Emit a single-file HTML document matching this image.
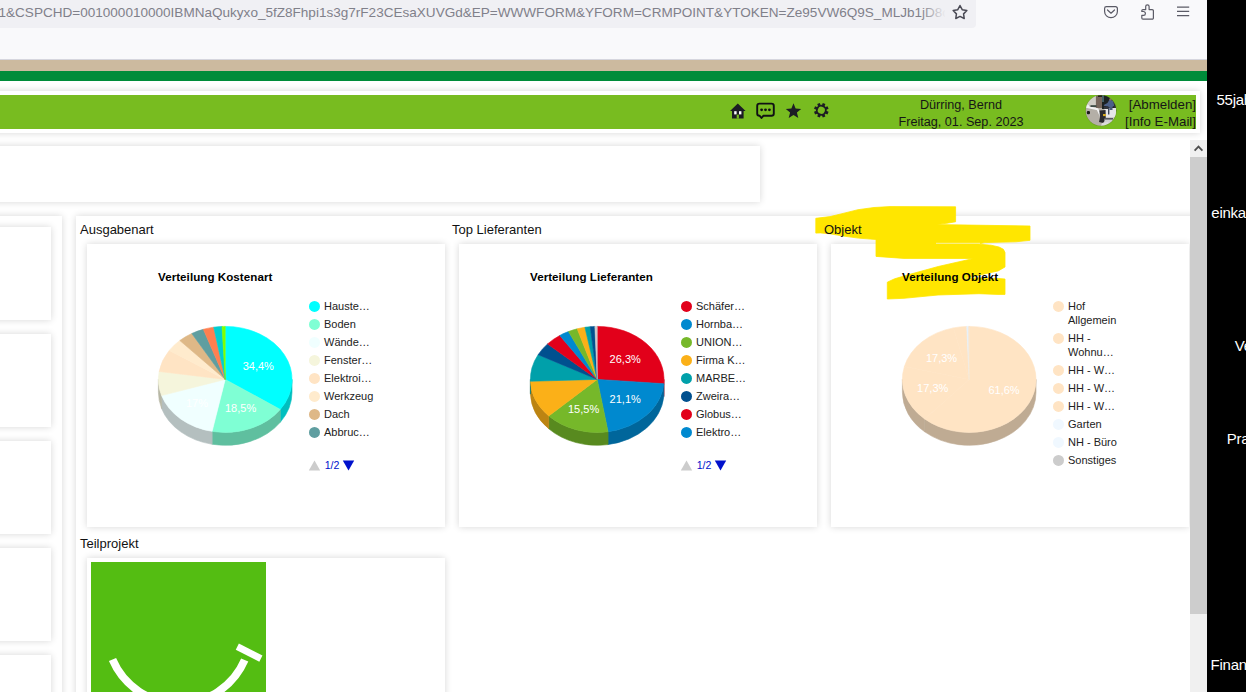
<!DOCTYPE html>
<html lang="de">
<head>
<meta charset="utf-8">
<title>CRM Point</title>
<style>
html,body{margin:0;padding:0;}
body{width:1246px;height:692px;overflow:hidden;position:relative;background:#fff;font-family:"Liberation Sans",sans-serif;font-size:13px;color:#1a1a1a;}
.abs{position:absolute;}
.card{position:absolute;background:#fff;box-shadow:0 0 7px rgba(0,0,0,0.16);}
.sec{position:absolute;font-size:13px;color:#111;white-space:nowrap;line-height:16px;}
.blk{position:absolute;color:#fff;font-size:15px;letter-spacing:-0.25px;white-space:nowrap;line-height:18px;}
svg text{font-family:"Liberation Sans",sans-serif;}
</style>
</head>
<body>
<!-- browser chrome -->
<div class="abs" style="left:0;top:0;width:1207px;height:60px;background:#f9f9fb;"></div>
<div class="abs" style="left:-10px;top:-6px;width:985.6px;height:34.1px;background:#f0f0f4;border-radius:4px;"></div>
<div class="abs" id="url" style="left:-1.5px;top:4.3px;width:946px;overflow:hidden;font-size:13.55px;line-height:18px;color:#80808a;white-space:nowrap;letter-spacing:0px;">1&amp;CSPCHD=001000010000IBMNaQukyxo_5fZ8Fhpi1s3g7rF23CEsaXUVGd&amp;EP=WWWFORM&amp;YFORM=CRMPOINT&amp;YTOKEN=Ze95VW6Q9S_MLJb1jD8c</div>
<div class="abs" style="left:921px;top:0;width:25px;height:28px;background:linear-gradient(90deg,rgba(240,240,244,0),rgba(240,240,244,1));"></div>
<svg class="abs" style="left:0;top:0;" width="1207" height="60" viewBox="0 0 1207 60">
  <!-- bookmark star -->
  <path d="M960.00,5.50 L962.20,9.67 L966.85,10.48 L963.57,13.86 L964.23,18.52 L960.00,16.45 L955.77,18.52 L956.43,13.86 L953.15,10.48 L957.80,9.67 Z" fill="none" stroke="#4a4a55" stroke-width="1.5" stroke-linejoin="round"/>
  <!-- pocket -->
  <path d="M1106.4,6.7 h9.2 a1.8,1.8 0 0 1 1.8,1.8 v3 a6.4,6.2 0 0 1 -12.8,0 v-3 a1.8,1.8 0 0 1 1.8,-1.8 Z" fill="none" stroke="#5b5b66" stroke-width="1.2"/>
  <path d="M1107.5,10 l3.5,3.2 l3.5,-3.2" fill="none" stroke="#5b5b66" stroke-width="1.2" stroke-linecap="round" stroke-linejoin="round"/>
  <!-- extension puzzle -->
  <path d="M1143,9.6 h2.7 v-3.1 a1.7,1.7 0 0 1 3.4,0 v3.1 h3.1 a1.2,1.2 0 0 1 1.2,1.2 v7.1 a1.2,1.2 0 0 1 -1.2,1.2 h-9.2 a1.2,1.2 0 0 1 -1.2,-1.2 v-2.6 h1.7 a1.9,1.9 0 0 0 0,-3.8 h-1.7 v-0.7 a1.2,1.2 0 0 1 1.2,-1.2 Z" fill="none" stroke="#5b5b66" stroke-width="1.2" stroke-linejoin="round"/>
  <!-- hamburger -->
  <path d="M1177,7.1 h12.2 M1177,11.4 h12.2 M1177,15.6 h12.2" stroke="#5b5b66" stroke-width="1.2"/>
</svg>

<!-- site top bands -->
<div class="abs" style="left:0;top:59px;width:1207px;height:1px;background:#d6d6de;"></div>
<div class="abs" style="left:0;top:60px;width:1207px;height:11px;background:#ccba9f;"></div>
<div class="abs" style="left:0;top:71px;width:1207px;height:10px;background:#008c3a;"></div>

<!-- header card -->
<div class="card" style="left:-10px;top:91px;width:1210px;height:42px;"></div>
<div class="abs" style="left:0;top:95px;width:1196px;height:34px;background:#78bc20;"></div>
<svg class="abs" style="left:720px;top:95px;" width="120" height="34" viewBox="720 95 120 34">
  <!-- home -->
  <path d="M737.8,103.5 l7.8,7.4 h-2 v7.6 h-11.6 v-7.6 h-2 Z" fill="#1c1c24"/>
  <rect x="734.2" y="111.2" width="2.4" height="3.2" fill="#fff"/><rect x="739" y="111.2" width="2.4" height="3.2" fill="#fff"/>
  <rect x="736.7" y="114.6" width="2.2" height="4" fill="#78bc20"/>
  <!-- chat -->
  <path d="M759.5,103.6 h12 a2.3,2.3 0 0 1 2.3,2.3 v7.6 a2.3,2.3 0 0 1 -2.3,2.3 h-8.2 l-1.8,2.2 l-1.8,-2.2 h-0.2 a2.3,2.3 0 0 1 -2.3,-2.3 v-7.6 a2.3,2.3 0 0 1 2.3,-2.3 Z" fill="none" stroke="#101014" stroke-width="1.9" stroke-linejoin="round"/>
  <circle cx="761.6" cy="109.8" r="1.4" fill="#101014"/><circle cx="765.5" cy="109.8" r="1.4" fill="#101014"/><circle cx="769.4" cy="109.8" r="1.4" fill="#101014"/>
  <!-- star -->
  <path d="M793.5,103.2 l2.1,5.3 l5.6,0.4 l-4.3,3.6 l1.4,5.6 l-4.8,-3.1 l-4.8,3.1 l1.4,-5.6 l-4.3,-3.6 l5.6,-0.4 Z" fill="#1c1c24"/>
  <!-- gear -->
  <g transform="translate(821.3,110.3) rotate(22.5)">
    <circle r="4.5" fill="none" stroke="#1c1c24" stroke-width="1.9"/>
    <g fill="#1c1c24">
      <rect x="-1.4" y="-7.3" width="2.8" height="2.6"/>
      <rect x="-1.4" y="-7.3" width="2.8" height="2.6" transform="rotate(45)"/>
      <rect x="-1.4" y="-7.3" width="2.8" height="2.6" transform="rotate(90)"/>
      <rect x="-1.4" y="-7.3" width="2.8" height="2.6" transform="rotate(135)"/>
      <rect x="-1.4" y="-7.3" width="2.8" height="2.6" transform="rotate(180)"/>
      <rect x="-1.4" y="-7.3" width="2.8" height="2.6" transform="rotate(225)"/>
      <rect x="-1.4" y="-7.3" width="2.8" height="2.6" transform="rotate(270)"/>
      <rect x="-1.4" y="-7.3" width="2.8" height="2.6" transform="rotate(315)"/>
    </g>
  </g>
</svg>
<div class="abs" id="uname" style="left:861px;top:96.5px;width:200px;text-align:center;font-size:12.65px;line-height:17px;color:#161616;white-space:nowrap;">Dürring, Bernd<br>Freitag, 01. Sep. 2023</div>
<!-- avatar -->
<svg class="abs" style="left:1085px;top:95px;" width="32" height="32" viewBox="0 0 32 32">
  <defs>
    <clipPath id="av"><circle cx="16" cy="15.5" r="15.2"/></clipPath>
    <filter id="avb" x="-10%" y="-10%" width="120%" height="120%"><feGaussianBlur stdDeviation="0.7"/></filter>
  </defs>
  <circle cx="16" cy="15.6" r="15.7" fill="#5f7a2a" opacity="0.45"/>
  <g clip-path="url(#av)">
    <g filter="url(#avb)">
      <rect x="-2" y="-2" width="36" height="36" fill="#b4afa7"/>
      <rect x="-2" y="-2" width="14" height="12.5" fill="#cfcdc6"/>
      <rect x="10.9" y="-2" width="6.3" height="15" fill="#76665b"/>
      <rect x="13" y="-2" width="5" height="4" fill="#26221f"/>
      <rect x="17" y="-2" width="17" height="16" fill="#1f2024"/>
      <rect x="17.4" y="-1" width="1.2" height="8" fill="#5e8a92"/>
      <path d="M24.7,4.3 L28.3,6.3 L29.2,10.7 L25.8,12.9 L23,11.4 L18.6,10.8 L19.2,9.8 L22.5,8 Z" fill="#4c6088"/>
      <circle cx="25.6" cy="4.3" r="1.2" fill="#8d6f60"/>
      <rect x="29" y="8" width="4" height="10" fill="#2a2d35"/>
      <rect x="19.5" y="13" width="11.5" height="9.5" fill="#e6e6e9"/>
      <rect x="23" y="12.5" width="1.4" height="7" fill="#3a4458"/><rect x="24.5" y="12" width="3" height="3" fill="#4a5a78"/>
      <rect x="19" y="11.6" width="4" height="2.4" fill="#33363c"/>
      <path d="M0,9.5 L4,10 L4.4,12.6 L0,13 Z" fill="#ececec"/>
      <path d="M1.3,11.8 L12.6,14.3 L16.7,23.4" fill="none" stroke="#f2f2f2" stroke-width="1.9" stroke-linejoin="round"/>
      <path d="M5.5,10.2 h6 v1.8 h-6 Z" fill="#3c4a44"/>
      <rect x="1.8" y="16" width="3.2" height="3.2" rx="1.2" fill="#1b1b1c"/>
      <path d="M14.4,15.5 L20.6,15 L20.8,25 L18,28 L14,27 L15,22 Z" fill="#2b2b2e"/>
      <rect x="18" y="19" width="2.9" height="2.1" fill="#d4a820"/>
      <path d="M19.7,23.6 L29,22.6 L27,29.5 L19,29.5 Z" fill="#cfcfd2"/>
      <rect x="20" y="23" width="8" height="1.6" fill="#55585e"/>
      <path d="M17,28 L24,26.5 L22,31 L16,31 Z" fill="#dcdcdc"/>
    </g>
  </g>
</svg>
<div class="abs" id="ulinks" style="left:1050px;top:96.2px;width:146px;text-align:right;font-size:13.3px;line-height:17px;color:#161616;white-space:nowrap;">[Abmelden]<br>[Info E-Mail]</div>

<!-- second card -->
<div class="card" style="left:-10px;top:146px;width:770px;height:56px;"></div>

<!-- left column -->
<div class="card" style="left:-10px;top:216px;width:72px;height:500px;"></div>
<div class="card" style="left:-10px;top:227px;width:61px;height:93px;"></div>
<div class="card" style="left:-10px;top:334px;width:61px;height:93px;"></div>
<div class="card" style="left:-10px;top:441px;width:61px;height:93px;"></div>
<div class="card" style="left:-10px;top:548px;width:61px;height:93px;"></div>
<div class="card" style="left:-10px;top:655px;width:61px;height:93px;"></div>

<!-- main container -->
<div class="card" style="left:75.5px;top:216px;width:1140px;height:500px;"></div>
<div class="card" style="left:87px;top:244px;width:358px;height:283px;"></div>
<div class="card" style="left:459px;top:244px;width:358px;height:283px;"></div>
<div class="card" style="left:831px;top:244px;width:358px;height:283px;"></div>
<div class="card" style="left:87px;top:558px;width:358px;height:200px;"></div>

<!-- highlighter -->
<svg class="abs" style="left:800px;top:195px;" width="260" height="115" viewBox="800 195 260 115">
  <path d="M815.8,218.3 L830,216.6 L842,213.7 L858,209.7 L874,207.5 L890,206.6 L955.6,206.8 L955.6,221.8 L947,223.2 L936,224.6 L1030,226 L1030,240.3 L1016,241.8 L985,242.6 L978,244.1 L991,245.2 L999,247 L1003.4,249.3 L1005,252.5 L1005,267 L998.2,270.9 L975,276 L957,279.3 L975,277.8 L998.2,278.5 L1005,279 L1005,294.4 L998,294.4 L979,293.7 L938,295 L904,298.3 L887.3,299 L887.3,282.2 L894.6,278.8 L911,274 L938.2,266.5 L973.5,258.5 L904,258.4 L876,256.4 L876,239.5 L858.2,238.1 L843.7,236.1 L830,233.8 L820.4,232.9 L815.8,233.1 Z" fill="#ffe600" stroke="#ffe600" stroke-width="0.8" stroke-linejoin="round"/>
  <path d="M936,243.3 L980,243.3" stroke="#f7f2b0" stroke-width="0.9" fill="none"/>
</svg>

<div class="sec" id="s1" style="left:80px;top:222px;">Ausgabenart</div>
<div class="sec" id="s2" style="left:452px;top:222px;">Top Lieferanten</div>
<div class="sec" id="s3" style="left:824px;top:222px;">Objekt</div>
<div class="sec" id="s4" style="left:80px;top:536px;">Teilprojekt</div>

<!-- charts -->
<svg class="abs" style="left:87px;top:244px;" width="1103" height="282" viewBox="87 244 1103 282">
  <text id="t1" x="158" y="281" font-size="11.6" letter-spacing="0.05" font-weight="bold" fill="#000">Verteilung Kostenart</text>
  <text id="t2" x="530" y="281" font-size="11.6" letter-spacing="0.05" font-weight="bold" fill="#000">Verteilung Lieferanten</text>
  <text id="t3" x="902" y="281" font-size="11.6" letter-spacing="0.05" font-weight="bold" fill="#000">Verteilung Objekt</text>
<path d="M292.00,379.40 A66.80,53.00 0 0 1 280.25,409.42 L280.25,422.32 A66.80,53.00 0 0 0 292.00,392.30 Z" fill="#00bfbf" stroke="#00bfbf" stroke-width="0.6"/>
<path d="M280.25,409.42 A66.80,53.00 0 0 1 212.11,431.37 L212.11,444.27 A66.80,53.00 0 0 0 280.25,422.32 Z" fill="#5fbf9f" stroke="#5fbf9f" stroke-width="0.6"/>
<path d="M212.11,431.37 A66.80,53.00 0 0 1 161.60,395.60 L161.60,408.50 A66.80,53.00 0 0 0 212.11,444.27 Z" fill="#b4bfbf" stroke="#b4bfbf" stroke-width="0.6"/>
<path d="M161.60,395.60 A66.80,53.00 0 0 1 158.40,379.40 L158.40,392.30 A66.80,53.00 0 0 0 161.60,408.50 Z" fill="#b7b7a5" stroke="#b7b7a5" stroke-width="0.6"/>
<path d="M225.20,379.40 L225.20,326.40 A66.80,53.00 0 0 1 280.25,409.42 Z" fill="#00FFFF" stroke="#00FFFF" stroke-width="0.6"/>
<path d="M225.20,379.40 L280.25,409.42 A66.80,53.00 0 0 1 212.11,431.37 Z" fill="#7FFFD4" stroke="#7FFFD4" stroke-width="0.6"/>
<path d="M225.20,379.40 L212.11,431.37 A66.80,53.00 0 0 1 161.60,395.60 Z" fill="#F0FFFF" stroke="#F0FFFF" stroke-width="0.6"/>
<path d="M225.20,379.40 L161.60,395.60 A66.80,53.00 0 0 1 159.15,371.47 Z" fill="#F5F5DC" stroke="#F5F5DC" stroke-width="0.6"/>
<path d="M225.20,379.40 L159.15,371.47 A66.80,53.00 0 0 1 169.30,350.38 Z" fill="#FFE4C4" stroke="#FFE4C4" stroke-width="0.6"/>
<path d="M225.20,379.40 L169.30,350.38 A66.80,53.00 0 0 1 179.81,340.51 Z" fill="#FFEBCD" stroke="#FFEBCD" stroke-width="0.6"/>
<path d="M225.20,379.40 L179.81,340.51 A66.80,53.00 0 0 1 191.80,333.50 Z" fill="#DEB887" stroke="#DEB887" stroke-width="0.6"/>
<path d="M225.20,379.40 L191.80,333.50 A66.80,53.00 0 0 1 203.34,329.32 Z" fill="#5F9EA0" stroke="#5F9EA0" stroke-width="0.6"/>
<path d="M225.20,379.40 L203.34,329.32 A66.80,53.00 0 0 1 213.72,327.19 Z" fill="#FF7F50" stroke="#FF7F50" stroke-width="0.6"/>
<path d="M225.20,379.40 L213.72,327.19 A66.80,53.00 0 0 1 222.05,326.46 Z" fill="#00CED1" stroke="#00CED1" stroke-width="0.6"/>
<path d="M225.20,379.40 L222.05,326.46 A66.80,53.00 0 0 1 225.20,326.40 Z" fill="#7FFF00" stroke="#7FFF00" stroke-width="0.6"/>
<text x="258.3" y="369.8" text-anchor="middle" fill="#fff" font-size="11">34,4%</text>
<text x="240.6" y="411.8" text-anchor="middle" fill="#fff" font-size="11">18,5%</text>
<text x="197.0" y="407.0" text-anchor="middle" fill="#fff" font-size="11">17%</text>
<circle cx="314.5" cy="306.4" r="5.5" fill="#00FFFF"/>
<text x="324.0" y="310.3" fill="#222" font-size="11">Hauste…</text>
<circle cx="314.5" cy="324.4" r="5.5" fill="#7FFFD4"/>
<text x="324.0" y="328.3" fill="#222" font-size="11">Boden</text>
<circle cx="314.5" cy="342.4" r="5.5" fill="#F0FFFF"/>
<text x="324.0" y="346.3" fill="#222" font-size="11">Wände…</text>
<circle cx="314.5" cy="360.4" r="5.5" fill="#F5F5DC"/>
<text x="324.0" y="364.3" fill="#222" font-size="11">Fenster…</text>
<circle cx="314.5" cy="378.4" r="5.5" fill="#FFE4C4"/>
<text x="324.0" y="382.3" fill="#222" font-size="11">Elektroi…</text>
<circle cx="314.5" cy="396.4" r="5.5" fill="#FFEBCD"/>
<text x="324.0" y="400.3" fill="#222" font-size="11">Werkzeug</text>
<circle cx="314.5" cy="414.4" r="5.5" fill="#DEB887"/>
<text x="324.0" y="418.3" fill="#222" font-size="11">Dach</text>
<circle cx="314.5" cy="432.4" r="5.5" fill="#5F9EA0"/>
<text x="324.0" y="436.3" fill="#222" font-size="11">Abbruc…</text>
<path d="M308.8,470.6 l5.7,-10.2 l5.7,10.2 Z" fill="#cccccc"/><text x="324.7" y="469.3" fill="#0011cc" font-size="10.6">1/2</text><path d="M342.8,460.4 l11.4,0 l-5.7,10.2 Z" fill="#0011cc"/>
<path d="M664.00,379.40 A66.80,53.00 0 0 1 663.78,383.72 L663.78,396.62 A66.80,53.00 0 0 0 664.00,392.30 Z" fill="#a90013" stroke="#a90013" stroke-width="0.6"/>
<path d="M663.78,383.72 A66.80,53.00 0 0 1 608.06,431.69 L608.06,444.59 A66.80,53.00 0 0 0 663.78,396.62 Z" fill="#00669b" stroke="#00669b" stroke-width="0.6"/>
<path d="M608.06,431.69 A66.80,53.00 0 0 1 548.79,415.92 L548.79,428.82 A66.80,53.00 0 0 0 608.06,444.59 Z" fill="#588a1f" stroke="#588a1f" stroke-width="0.6"/>
<path d="M548.79,415.92 A66.80,53.00 0 0 1 530.44,381.25 L530.44,394.15 A66.80,53.00 0 0 0 548.79,428.82 Z" fill="#bc8412" stroke="#bc8412" stroke-width="0.6"/>
<path d="M530.44,381.25 A66.80,53.00 0 0 1 530.40,379.40 L530.40,392.30 A66.80,53.00 0 0 0 530.44,394.15 Z" fill="#00787f" stroke="#00787f" stroke-width="0.6"/>
<path d="M597.20,379.40 L597.20,326.40 A66.80,53.00 0 0 1 663.78,383.72 Z" fill="#E2001A" stroke="#E2001A" stroke-width="0.6"/>
<path d="M597.20,379.40 L663.78,383.72 A66.80,53.00 0 0 1 608.06,431.69 Z" fill="#0089CF" stroke="#0089CF" stroke-width="0.6"/>
<path d="M597.20,379.40 L608.06,431.69 A66.80,53.00 0 0 1 548.79,415.92 Z" fill="#76B82A" stroke="#76B82A" stroke-width="0.6"/>
<path d="M597.20,379.40 L548.79,415.92 A66.80,53.00 0 0 1 530.44,381.25 Z" fill="#FBB018" stroke="#FBB018" stroke-width="0.6"/>
<path d="M597.20,379.40 L530.44,381.25 A66.80,53.00 0 0 1 538.11,354.68 Z" fill="#00A0AA" stroke="#00A0AA" stroke-width="0.6"/>
<path d="M597.20,379.40 L538.11,354.68 A66.80,53.00 0 0 1 547.56,343.94 Z" fill="#00508F" stroke="#00508F" stroke-width="0.6"/>
<path d="M597.20,379.40 L547.56,343.94 A66.80,53.00 0 0 1 559.75,335.51 Z" fill="#E2001A" stroke="#E2001A" stroke-width="0.6"/>
<path d="M597.20,379.40 L559.75,335.51 A66.80,53.00 0 0 1 568.44,331.56 Z" fill="#0089CF" stroke="#0089CF" stroke-width="0.6"/>
<path d="M597.20,379.40 L568.44,331.56 A66.80,53.00 0 0 1 577.22,328.83 Z" fill="#76B82A" stroke="#76B82A" stroke-width="0.6"/>
<path d="M597.20,379.40 L577.22,328.83 A66.80,53.00 0 0 1 584.91,327.30 Z" fill="#FBB018" stroke="#FBB018" stroke-width="0.6"/>
<path d="M597.20,379.40 L584.91,327.30 A66.80,53.00 0 0 1 590.22,326.69 Z" fill="#00A0AA" stroke="#00A0AA" stroke-width="0.6"/>
<path d="M597.20,379.40 L590.22,326.69 A66.80,53.00 0 0 1 594.87,326.43 Z" fill="#00508F" stroke="#00508F" stroke-width="0.6"/>
<path d="M597.20,379.40 L594.87,326.43 A66.80,53.00 0 0 1 597.20,326.40 Z" fill="#CCCCCC" stroke="#CCCCCC" stroke-width="0.6"/>
<text x="625.2" y="363.2" text-anchor="middle" fill="#fff" font-size="11">26,3%</text>
<text x="625.2" y="402.8" text-anchor="middle" fill="#fff" font-size="11">21,1%</text>
<text x="583.6" y="413.2" text-anchor="middle" fill="#fff" font-size="11">15,5%</text>
<circle cx="686.5" cy="306.4" r="5.5" fill="#E2001A"/>
<text x="696.0" y="310.3" fill="#222" font-size="11">Schäfer…</text>
<circle cx="686.5" cy="324.4" r="5.5" fill="#0089CF"/>
<text x="696.0" y="328.3" fill="#222" font-size="11">Hornba…</text>
<circle cx="686.5" cy="342.4" r="5.5" fill="#76B82A"/>
<text x="696.0" y="346.3" fill="#222" font-size="11">UNION…</text>
<circle cx="686.5" cy="360.4" r="5.5" fill="#FBB018"/>
<text x="696.0" y="364.3" fill="#222" font-size="11">Firma K…</text>
<circle cx="686.5" cy="378.4" r="5.5" fill="#00A0AA"/>
<text x="696.0" y="382.3" fill="#222" font-size="11">MARBE…</text>
<circle cx="686.5" cy="396.4" r="5.5" fill="#00508F"/>
<text x="696.0" y="400.3" fill="#222" font-size="11">Zweira…</text>
<circle cx="686.5" cy="414.4" r="5.5" fill="#E2001A"/>
<text x="696.0" y="418.3" fill="#222" font-size="11">Globus…</text>
<circle cx="686.5" cy="432.4" r="5.5" fill="#0089CF"/>
<text x="696.0" y="436.3" fill="#222" font-size="11">Elektro…</text>
<path d="M680.8,470.6 l5.7,-10.2 l5.7,10.2 Z" fill="#cccccc"/><text x="696.7" y="469.3" fill="#0011cc" font-size="10.6">1/2</text><path d="M714.8,460.4 l11.4,0 l-5.7,10.2 Z" fill="#0011cc"/>
<path d="M1036.00,379.40 A66.80,53.00 0 0 1 924.71,418.93 L924.71,431.83 A66.80,53.00 0 0 0 1036.00,392.30 Z" fill="#bfab93" stroke="#bfab93" stroke-width="0.6"/>
<path d="M924.71,418.93 A66.80,53.00 0 0 1 902.40,379.40 L902.40,392.30 A66.80,53.00 0 0 0 924.71,431.83 Z" fill="#bfab93" stroke="#bfab93" stroke-width="0.6"/>
<path d="M969.20,379.40 L969.20,326.40 A66.80,53.00 0 1 1 924.71,418.93 Z" fill="#FFE4C4" stroke="#FFE4C4" stroke-width="0.6"/>
<path d="M969.20,379.40 L924.71,418.93 A66.80,53.00 0 0 1 904.40,366.54 Z" fill="#FFE4C4" stroke="#FFE4C4" stroke-width="0.6"/>
<path d="M969.20,379.40 L904.40,366.54 A66.80,53.00 0 0 1 953.40,327.90 Z" fill="#FFE4C4" stroke="#FFE4C4" stroke-width="0.6"/>
<path d="M969.20,379.40 L953.40,327.90 A66.80,53.00 0 0 1 966.75,326.44 Z" fill="#FFE4C4" stroke="#FFE4C4" stroke-width="0.6"/>
<path d="M969.20,379.40 L966.75,326.44 A66.80,53.00 0 0 1 968.85,326.40 Z" fill="#E6F1FC" stroke="#E6F1FC" stroke-width="0.6"/>
<path d="M969.20,379.40 L968.85,326.40 A66.80,53.00 0 0 1 969.20,326.40 Z" fill="#FFE4C4" stroke="#FFE4C4" stroke-width="0.6"/>
<text x="1004.0" y="394.1" text-anchor="middle" fill="#fff" font-size="11">61,6%</text>
<text x="932.7" y="391.9" text-anchor="middle" fill="#fff" font-size="11">17,3%</text>
<text x="941.5" y="361.7" text-anchor="middle" fill="#fff" font-size="11">17,3%</text>
<circle cx="1058.5" cy="306.4" r="5.5" fill="#FFE4C4"/>
<text x="1068.0" y="310.3" fill="#222" font-size="11">Hof</text>
<text x="1068.0" y="324.3" fill="#222" font-size="11">Allgemein</text>
<circle cx="1058.5" cy="338.4" r="5.5" fill="#FFE4C4"/>
<text x="1068.0" y="342.3" fill="#222" font-size="11">HH -</text>
<text x="1068.0" y="356.3" fill="#222" font-size="11">Wohnu…</text>
<circle cx="1058.5" cy="370.4" r="5.5" fill="#FFE4C4"/>
<text x="1068.0" y="374.3" fill="#222" font-size="11">HH - W…</text>
<circle cx="1058.5" cy="388.4" r="5.5" fill="#FFE4C4"/>
<text x="1068.0" y="392.3" fill="#222" font-size="11">HH - W…</text>
<circle cx="1058.5" cy="406.4" r="5.5" fill="#FFE4C4"/>
<text x="1068.0" y="410.3" fill="#222" font-size="11">HH - W…</text>
<circle cx="1058.5" cy="424.4" r="5.5" fill="#F0F8FF"/>
<text x="1068.0" y="428.3" fill="#222" font-size="11">Garten</text>
<circle cx="1058.5" cy="442.4" r="5.5" fill="#F0F8FF"/>
<text x="1068.0" y="446.3" fill="#222" font-size="11">NH - Büro</text>
<circle cx="1058.5" cy="460.4" r="5.5" fill="#CCCCCC"/>
<text x="1068.0" y="464.3" fill="#222" font-size="11">Sonstiges</text>
</svg>

<!-- teilprojekt tile -->
<div class="abs" style="left:91px;top:562px;width:175px;height:140px;background:#54bd12;"></div>
<svg class="abs" style="left:91px;top:562px;" width="175" height="130" viewBox="91 562 175 130">
  <path d="M112.5,659.6 A71.9,71.9 0 0 0 244.7,660" fill="none" stroke="#fff" stroke-width="7.8"/>
  <path d="M237.3,646.7 L260.9,658.7" fill="none" stroke="#fff" stroke-width="6.9"/>
</svg>

<!-- scrollbar -->
<div class="abs" style="left:1190px;top:140px;width:17px;height:552px;background:#f0f0f0;"></div>
<div class="abs" style="left:1190px;top:157px;width:17px;height:457px;background:#cdcdcd;"></div>
<svg class="abs" style="left:1190px;top:140px;" width="17" height="17" viewBox="0 0 17 17"><path d="M4.6,10.6 L8.5,6.6 L12.4,10.6" fill="none" stroke="#505050" stroke-width="1.8"/></svg>

<!-- black region right -->
<div class="abs" style="left:1207px;top:0;width:39px;height:692px;background:#000;overflow:hidden;"></div>
<div class="blk" style="left:1216.5px;top:91px;">55jahre</div>
<div class="blk" style="left:1211.3px;top:203.5px;">einkauf</div>
<div class="blk" style="left:1234.8px;top:336.7px;">Verkauf</div>
<div class="blk" style="left:1226.8px;top:429.8px;">Praxis</div>
<div class="blk" style="left:1210.6px;top:655.6px;">Finanzen</div>
</body>
</html>
